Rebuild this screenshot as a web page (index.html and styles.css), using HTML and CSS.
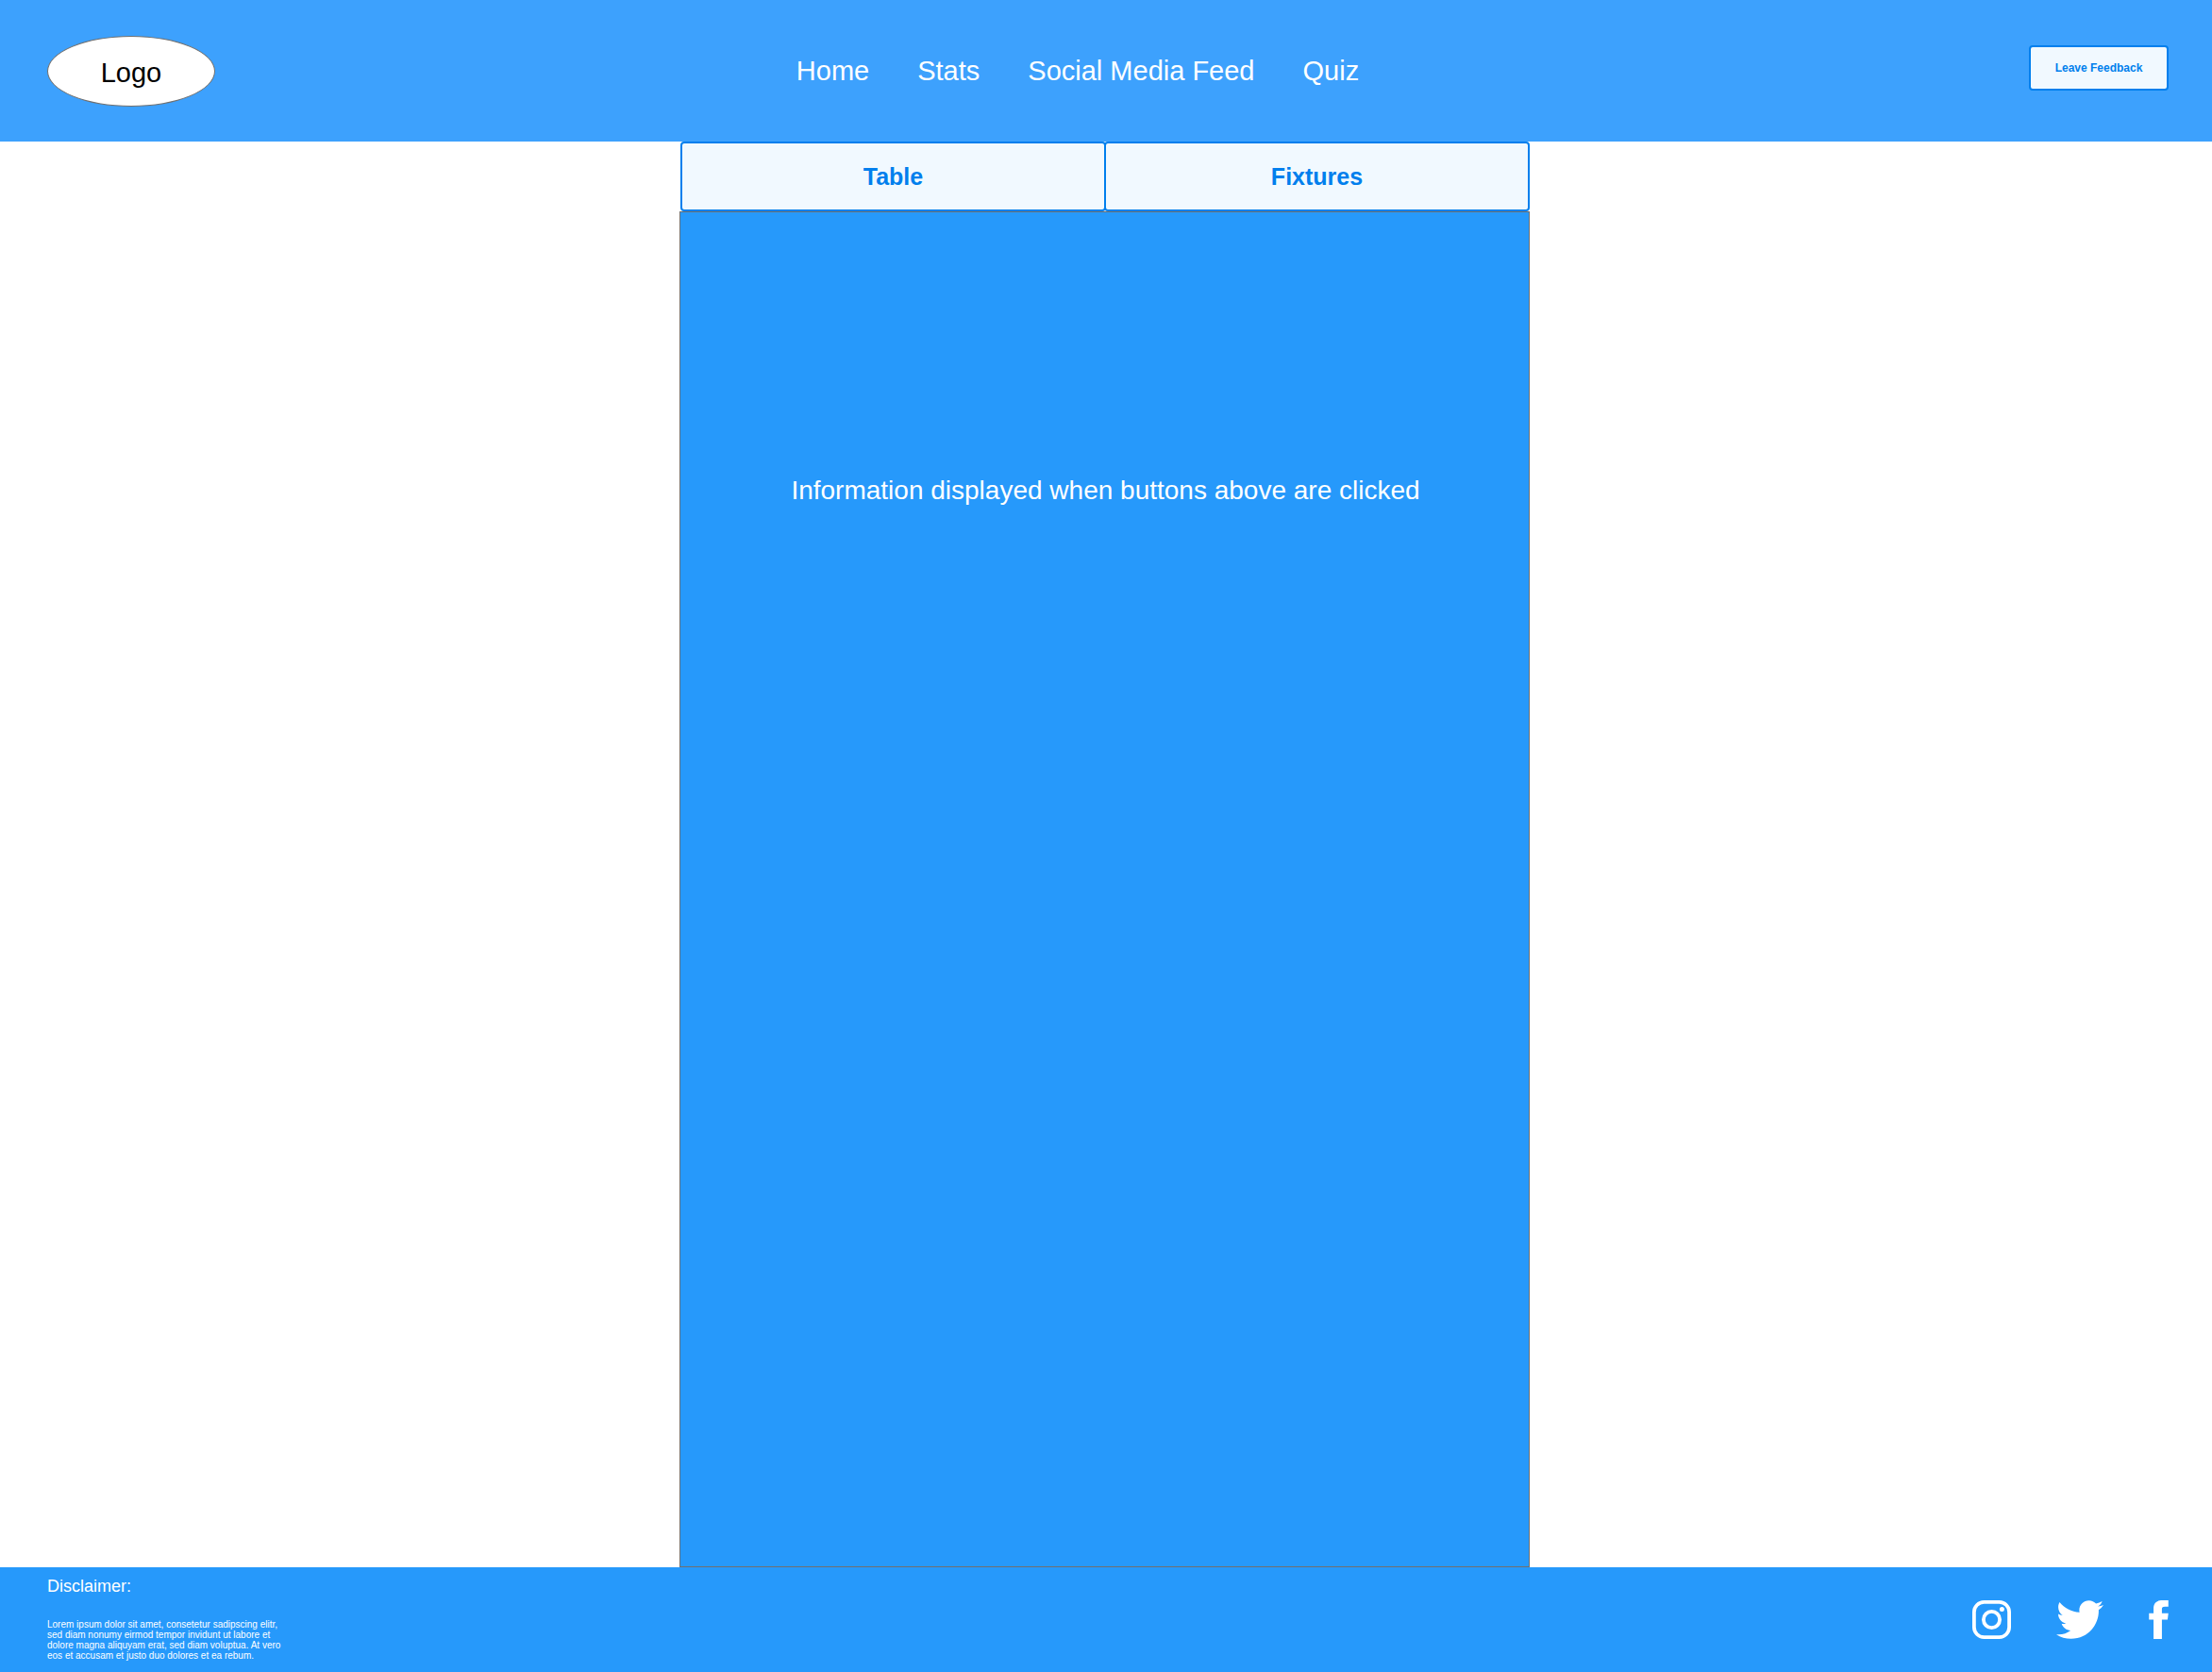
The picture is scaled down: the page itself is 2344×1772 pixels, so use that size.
FILE: index.html
```html
<!DOCTYPE html>
<html lang="en">
<head>
<meta charset="utf-8">
<meta name="viewport" content="width=device-width, initial-scale=1">
<title>Stats</title>
<link rel="stylesheet" href="styles.css">
</head>
<body>
<header class="header">
  <a class="logo" href="#">Logo</a>
  <nav class="nav">
    <a href="#">Home</a>
    <a href="#">Stats</a>
    <a href="#">Social Media Feed</a>
    <a href="#">Quiz</a>
  </nav>
  <button class="button feedback" type="button">Leave Feedback</button>
</header>
<main class="main">
  <section class="content">
    <div class="tabs">
      <button class="button tab" type="button">Table</button>
      <button class="button tab" type="button">Fixtures</button>
    </div>
    <div class="panel">
      <p class="panel-text">Information displayed when buttons above are clicked</p>
    </div>
  </section>
</main>
<footer class="footer">
  <div class="disclaimer">
    <h2 class="disclaimer-title">Disclaimer:</h2>
    <p class="disclaimer-text">Lorem ipsum dolor sit amet, consetetur sadipscing elitr, sed diam nonumy eirmod tempor invidunt ut labore et dolore magna aliquyam erat, sed diam voluptua. At vero eos et accusam et justo duo dolores et ea rebum.</p>
  </div>
  <div class="social">
    <a href="#" aria-label="Instagram">
      <svg width="41" height="41" viewBox="0 0 41 41" fill="none" stroke="currentColor" stroke-width="3.8">
        <rect x="1.9" y="1.9" width="37.2" height="37.2" rx="10.5"/>
        <circle cx="20.5" cy="20.5" r="8.6"/>
        <circle cx="31.4" cy="9.6" r="2.5" fill="currentColor" stroke="none"/>
      </svg>
    </a>
    <a href="#" aria-label="Twitter">
      <svg width="50" height="41" viewBox="20 64 472 384" fill="currentColor">
        <path d="M492 109.5c-17.4 7.7-36 12.9-55.6 15.3 20-12 35.4-31 42.6-53.6-18.7 11.1-39.4 19.2-61.5 23.5C399.8 75.8 374.6 64 346.8 64c-53.5 0-96.8 43.4-96.8 96.9 0 7.6.8 15 2.5 22.1-80.5-4-151.9-42.6-199.6-101.3-8.3 14.3-13.1 31-13.1 48.7 0 33.6 17.2 63.3 43.2 80.7-16-.4-31-4.8-44-12.1v1.2c0 47 33.4 86.1 77.7 95-8.1 2.2-16.7 3.4-25.5 3.4-6.2 0-12.3-.6-18.2-1.8 12.3 38.5 48.1 66.5 90.5 67.3-33.1 26-74.9 41.5-120.3 41.5-7.8 0-15.5-.5-23.1-1.4C62.8 432 113.7 448 168.3 448 346.6 448 444 300.3 444 172.2c0-4.2-.1-8.4-.3-12.5C462.6 146 479 129 492 109.5z"/>
      </svg>
    </a>
    <a href="#" aria-label="Facebook">
      <svg width="21" height="41" viewBox="160 64 192 384" fill="currentColor">
        <path d="M288 192v-38.1c0-17.2 3.8-25.9 30.5-25.9H352V64h-55.9c-68.5 0-91.1 31.4-91.1 85.3V192h-45v64h45v192h83V256h56.4l7.6-64h-64z"/>
      </svg>
    </a>
  </div>
</footer>
</body>
</html>
```
FILE: styles.css
```css
* {
  box-sizing: border-box;
}

body {
  margin: 0;
  background: #fff;
  color: #fff;
  font-family: "Liberation Sans", Arial, sans-serif;
}

a {
  color: inherit;
  text-decoration: none;
}

.header {
  display: grid;
  grid-template-columns: 1fr auto 1fr;
  align-items: center;
  min-height: 150px;
  padding: 0 46px 0 50px;
  background: #3da1fd;
}

.logo {
  display: flex;
  align-items: center;
  justify-content: center;
  width: 178px;
  height: 75px;
  padding-top: 4px;
  border: 1px solid #707070;
  border-radius: 50%;
  background: #fff;
  color: #000;
  font-size: 29px;
}

.nav {
  display: flex;
  flex-wrap: wrap;
  gap: 51px;
  padding-right: 64px;
  font-size: 29px;
}

.button {
  border: 2px solid #007fed;
  border-radius: 4px;
  background: #f1f9ff;
  color: #007fed;
  font-family: inherit;
  font-weight: bold;
  cursor: pointer;
}

.feedback {
  justify-self: end;
  width: 148px;
  height: 48px;
  margin-bottom: 6px;
  font-size: 12px;
}

.main {
  display: grid;
  grid-template-columns: 720fr 901fr 723fr;
}

.content {
  grid-column: 2;
}

.tabs {
  display: flex;
  padding-left: 1px;
}

.tab {
  flex: 1;
  height: 74px;
  font-size: 25px;
}

.tab + .tab {
  margin-left: -2px;
}

.panel {
  min-height: 1437px;
  padding: 279px 16px 16px 18px;
  border: 1px solid #707070;
  background: #2699fb;
}

.panel-text {
  margin: 0;
  font-size: 28px;
  line-height: 32px;
  text-align: center;
}

.footer {
  display: flex;
  align-items: center;
  justify-content: space-between;
  min-height: 111px;
  padding: 0 46px 0 50px;
  background: #2699fb;
}

.disclaimer {
  width: 256px;
  padding-bottom: 3px;
}

.disclaimer-title {
  margin: 0 0 25px;
  font-size: 18px;
  font-weight: normal;
  line-height: 20px;
}

.disclaimer-text {
  margin: 0;
  font-size: 10px;
  line-height: 11px;
}

.social {
  display: flex;
  gap: 48px;
}

.social svg {
  display: block;
}
```
